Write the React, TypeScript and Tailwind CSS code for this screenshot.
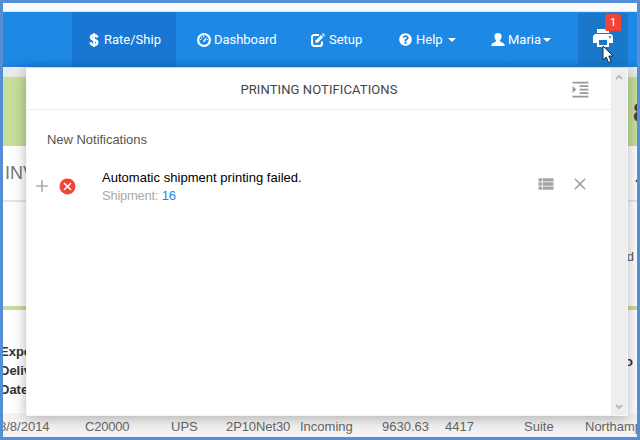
import React from "react";
import { FaQuestionCircle } from "react-icons/fa";
import { MdPrint, MdViewList, MdClose, MdFormatIndentIncrease, MdAdd, MdCancel } from "react-icons/md";

function DollarIcon() {
  return (
    <svg width="14" height="14" viewBox="0 0 14 14" className="shrink-0">
      <path d="M10.3 4.4C10 2.9 8.8 2.2 7 2.2C5.1 2.2 4 3.1 4 4.4C4 7.4 10.3 6.2 10.3 9.5C10.3 11 9 11.9 7 11.9C5 11.9 3.8 11 3.5 9.3" fill="none" stroke="#fff" strokeWidth="2.5" />
      <path d="M7 0V14" stroke="#fff" strokeWidth="1.8" />
    </svg>
  );
}

function DashboardIcon() {
  return (
    <svg width="14" height="14" viewBox="0 0 14 14" className="shrink-0">
      <circle cx="7" cy="7" r="5.9" fill="none" stroke="#fff" strokeWidth="2.2" />
      <path d="M5.9 8.6L7.2 6.6L10 3.8L8.5 7.6Q7.2 9.6 5.9 8.6Z" fill="#fff" />
      <path d="M3 6.5h1.3M4.2 4.3l.9.8M6.7 3v1.2M9.8 6.5h1.2" stroke="#fff" strokeWidth="1.1" />
    </svg>
  );
}

function EditIcon() {
  return (
    <svg width="14" height="14" viewBox="0 0 14 14" className="shrink-0">
      <path d="M8 2H3.5Q1 2 1 4.5v6Q1 13 3.5 13h5Q11 13 11 10.5V8.5" fill="none" stroke="#fff" strokeWidth="2.1" />
      <path d="M4.3 9.9L4.8 7.2L10.1 1.9L12.3 4.1L7 9.4Z" fill="#fff" />
      <path d="M11 1.2L12 .2L14 2.2L13 3.2Z" fill="#fff" />
    </svg>
  );
}

function UserIcon() {
  return (
    <svg width="14" height="14" viewBox="0 0 14 14" className="shrink-0">
      <path d="M7 0C9.3 0 10.8 1.5 10.6 3.8C10.4 5.6 9.7 6.6 9.1 7.2V8.4L12.5 10.2Q13.7 10.8 13.7 13H.3Q.3 10.8 1.5 10.2L4.9 8.4V7.2C4.3 6.6 3.6 5.6 3.4 3.8C3.2 1.5 4.7 0 7 0Z" fill="#fff" />
    </svg>
  );
}

function Caret({ className = "" }: { className?: string }) {
  return <span className={`mt-px h-0 w-0 border-x-4 border-t-4 border-x-transparent border-t-white ${className}`} />;
}

function Navbar() {
  return (
    <nav className="flex h-[55px] shrink-0 bg-[#1e88e5] bg-linear-to-b from-[#1e88e5] from-88% to-[#1b7ed9] pl-[69px] font-['Roboto',sans-serif] text-[13px] text-white">
      <div className="flex w-[104px] items-center bg-[#1976d2] pl-[15px]">
        <DollarIcon />
        <span className="ml-[3px]">Rate/Ship</span>
      </div>
      <div className="flex w-[135px] items-center pl-[21px]">
        <DashboardIcon />
        <span className="ml-[3px] tracking-[-0.05px]">Dashboard</span>
      </div>
      <div className="flex w-[88px] items-center">
        <EditIcon />
        <span className="ml-1">Setup</span>
      </div>
      <div className="flex w-[92px] items-center">
        <FaQuestionCircle className="text-[13px]" />
        <span className="ml-1">Help</span>
        <Caret className="ml-[5px]" />
      </div>
      <div className="flex w-[87px] items-center">
        <UserIcon />
        <span className="ml-[3px]">Maria</span>
        <Caret className="ml-[2px]" />
      </div>
      <div className="relative mt-px h-[52px] w-[50px] rounded-[3px] bg-[#1a78ca]">
        <MdPrint className="ml-[13px] mt-[13px] text-[24px]" />
        <span className="absolute left-[27px] top-px flex h-[17px] w-4 items-center justify-center rounded-[2px] bg-[#f44336] pt-px text-[11px]">1</span>
        <svg className="absolute left-6 top-[32px] z-30" width="14" height="20" viewBox="0 0 14 20">
          <path d="M1 1V15L4.2 12L6.5 17.5L9.1 16.4L6.8 11H11Z" fill="#fff" stroke="#222b3c" />
        </svg>
      </div>
    </nav>
  );
}

function Background() {
  return (
    <main className="flex grow flex-col overflow-hidden bg-white">
      <div className="h-[10px] shrink-0 bg-[#eaeaea]" />
      <div className="flex h-[69px] shrink-0 items-center justify-end overflow-hidden bg-[#c5df9b]">
        <span className="-mr-[11px] mt-[4px] text-[27px] font-bold text-[#444]">8</span>
      </div>
      <div className="flex h-[56px] shrink-0 items-center justify-between border-b-2 border-[#e6e6e6] pl-[2px] text-[18px] text-[#777]">
        <span>INVOICE</span>
        <span className="-mr-[4px] mt-[14px] font-bold text-[#444]">-</span>
      </div>
      <div className="flex h-[104px] shrink-0 justify-end pt-[45px] text-[13px] text-[#555]">
        <span className="mr-[3px]">d</span>
      </div>
      <div className="h-[4px] shrink-0 bg-[#c5df9b]" />
      <div className="flex h-[103px] shrink-0 justify-between pt-[32px] text-[13px] font-bold leading-[19px] text-[#333]">
        <div className="-ml-[3px]">Expected<br />Delivery<br />Date</div>
        <span className="mr-[4px] mt-[10px]">o</span>
      </div>
      <div className="flex h-6 shrink-0 items-center whitespace-nowrap bg-[#f3f3f3] pt-[3px] text-[13px] leading-4 text-[#666]">
        <span className="-ml-[4px] w-[86px] shrink-0">8/8/2014</span>
        <span className="w-[86px] shrink-0 tracking-[-0.2px]">C20000</span>
        <span className="w-[55px] shrink-0">UPS</span>
        <span className="w-[74px] shrink-0 tracking-[-0.1px]">2P10Net30</span>
        <span className="w-[82px] shrink-0">Incoming</span>
        <span className="w-[63px] shrink-0">9630.63</span>
        <span className="w-[79px] shrink-0">4417</span>
        <span className="w-[61px] shrink-0">Suite</span>
        <span className="shrink-0">Northampton</span>
      </div>
    </main>
  );
}

function NotificationsPanel() {
  return (
    <section className="absolute left-[23px] top-[65px] z-20 flex h-[348px] w-[602px] overflow-hidden rounded-b-[2px] border-x border-b border-[#f7f7f7] bg-white shadow-[0_2px_14px_rgba(0,0,0,0.3)]">
      <div className="grow">
        <header className="relative flex h-[42px] items-center justify-center border-b border-[#ededed] pt-[2px] font-['Roboto',sans-serif] text-[13px] tracking-[0.1px] text-[#444]">
          <h1>PRINTING NOTIFICATIONS</h1>
          <MdFormatIndentIncrease className="absolute right-[20px] top-[11px] text-[21px] text-[#999]" />
        </header>
        <h2 className="ml-[20px] mt-[21px] text-[13px] leading-[18px] tracking-[-0.03px] text-[#555]">New Notifications</h2>
        <div className="mt-[20px] flex h-[36px] items-start">
          <MdAdd className="ml-[5px] mt-[7px] text-[20px] text-[#aaa]" />
          <MdCancel className="ml-[6px] mt-[8px] text-[19px] text-[#f44336]" />
          <div className="ml-[25px] w-[434px] text-[13px] leading-[18px]">
            <p className="tracking-[0.03px] text-black">Automatic shipment printing failed.</p>
            <p className="tracking-[-0.25px] text-[#aaa]">Shipment: <a className="text-[#1e88e5]">16</a></p>
          </div>
          <MdViewList className="mt-[5px] text-[20px] text-[#a5a5a5]" />
          <MdClose className="ml-[14px] mt-[5px] text-[20px] text-[#a5a5a5]" />
        </div>
      </div>
      <div className="flex w-4 shrink-0 flex-col items-center justify-between bg-[#eee] pb-[5px] pt-[6px]">
        <svg width="8" height="7" viewBox="0 0 8 7"><path d="M1 5L4 2L7 5" fill="none" stroke="#bcbcbc" strokeWidth="2" /></svg>
        <svg width="8" height="7" viewBox="0 0 8 7"><path d="M1 2L4 5L7 2" fill="none" stroke="#bcbcbc" strokeWidth="2" /></svg>
      </div>
    </section>
  );
}

export default function App() {
  return (
    <div className="relative flex h-[440px] w-[640px] flex-col overflow-hidden border-[3px] border-[#558ed5] font-['Liberation_Sans',Arial,sans-serif]">
      <div className="h-[9px] shrink-0 border-b border-[#dfe5ea] bg-[#fafafa]" />
      <Navbar />
      <Background />
      <NotificationsPanel />
    </div>
  );
}
